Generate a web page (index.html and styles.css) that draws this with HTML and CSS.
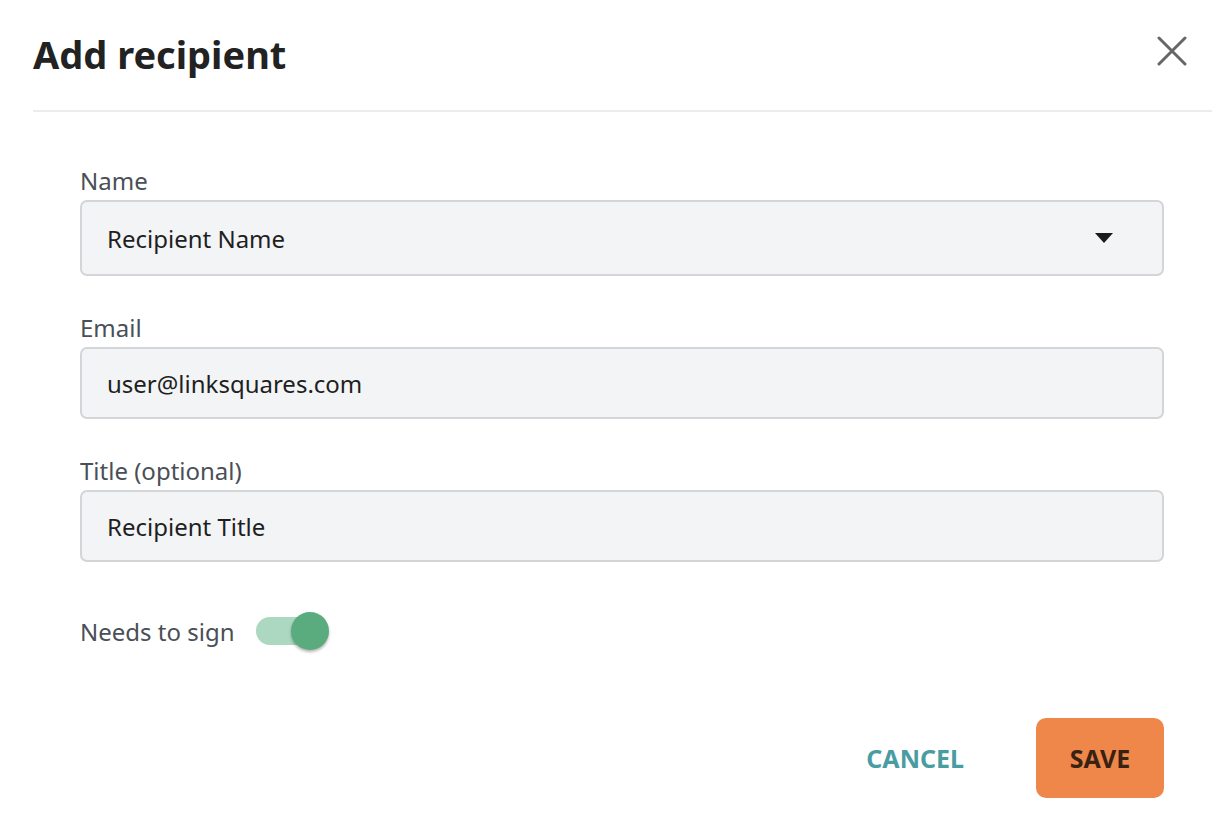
FILE: index.html
```html
<!DOCTYPE html>
<html lang="en">
<head>
<meta charset="utf-8">
<title>Add recipient</title>
<link rel="stylesheet" href="styles.css">
</head>
<body>
<div class="dialog">
  <header class="dialog-header">
    <h1 class="dialog-title">Add recipient</h1>
    <button class="close-btn" aria-label="Close">
      <svg width="30" height="30" viewBox="0 0 30 30"><path d="M2 2 L28 28 M28 2 L2 28" stroke="#666" stroke-width="3" stroke-linecap="round" fill="none"/></svg>
    </button>
  </header>
  <div class="dialog-body">
    <div class="field">
      <label class="field-label">Name</label>
      <div class="input select">
        <span>Recipient Name</span>
        <svg class="caret" width="18" height="10" viewBox="0 0 18 10"><path d="M0 0 H18 L9 10 Z" fill="#1a1a1a"/></svg>
      </div>
    </div>
    <div class="field">
      <label class="field-label">Email</label>
      <div class="input"><span>user@linksquares.com</span></div>
    </div>
    <div class="field">
      <label class="field-label">Title (optional)</label>
      <div class="input"><span>Recipient Title</span></div>
    </div>
    <div class="toggle-row">
      <span class="toggle-label">Needs to sign</span>
      <span class="toggle"><span class="track"></span><span class="knob"></span></span>
    </div>
    <div class="actions">
      <button class="btn-cancel">CANCEL</button>
      <button class="btn-save">SAVE</button>
    </div>
  </div>
</div>
</body>
</html>
```
FILE: styles.css
```css
* { box-sizing: border-box; }
html, body { margin: 0; padding: 0; background: #fff; }
body { font-family: "Noto Sans", "Open Sans", sans-serif; color: #1f1f1f; }

.dialog { width: 1228px; height: 826px; }

.dialog-header {
  display: flex;
  align-items: center;
  justify-content: space-between;
  margin: 0 16px 0 33px;
  height: 112px;
  border-bottom: 2px solid #ececec;
}
.dialog-title {
  margin: 0;
  font-size: 38px;
  font-weight: 700;
  color: #222;
  line-height: 48px;
  padding-bottom: 2px;
}
.close-btn {
  background: none;
  border: 0;
  padding: 0;
  margin-right: 25px;
  margin-bottom: 8px;
  width: 30px;
  height: 30px;
  display: flex;
}

.dialog-body {
  padding: 55px 64px 0 80px;
}
.field { margin-bottom: 38px; }
.field-label {
  display: block;
  font-size: 24px;
  line-height: 28px;
  color: #4a4f57;
  margin-bottom: 5px;
}
.input {
  height: 72px;
  border: 2px solid #d4d5d8;
  border-radius: 7px;
  background: #f3f4f6;
  display: flex;
  align-items: center;
  padding: 0 24px 0 25px;
  font-size: 24px;
  color: #1f1f1f;
}
.input.select {
  height: 76px;
  justify-content: space-between;
  padding-right: 49px;
}
.caret { display: block; }

.toggle-row {
  display: flex;
  align-items: center;
  gap: 21px;
  margin-top: 49px;
  height: 40px;
}
.toggle-label { font-size: 24px; color: #4a4f57; }
.toggle { position: relative; width: 76px; height: 40px; display: block; }
.track {
  position: absolute;
  left: 0; top: 6px;
  width: 62px; height: 28px;
  border-radius: 14px;
  background: #acd8c1;
}
.knob {
  position: absolute;
  left: 35px; top: 1px;
  width: 38px; height: 38px;
  border-radius: 50%;
  background: #5aac7e;
  box-shadow: 0 2px 3px rgba(0,0,0,0.3);
}

.actions {
  display: flex;
  justify-content: flex-end;
  align-items: center;
  gap: 72px;
  margin-top: 67px;
}
.btn-cancel {
  background: none;
  border: 0;
  padding: 0;
  font-family: inherit;
  font-size: 25px;
  font-weight: 700;
  color: #4a9ca3;
}
.btn-save {
  width: 128px;
  height: 80px;
  border: 0;
  border-radius: 10px;
  background: #f0874a;
  font-family: inherit;
  font-size: 25px;
  font-weight: 700;
  color: #3a2212;
}
```
